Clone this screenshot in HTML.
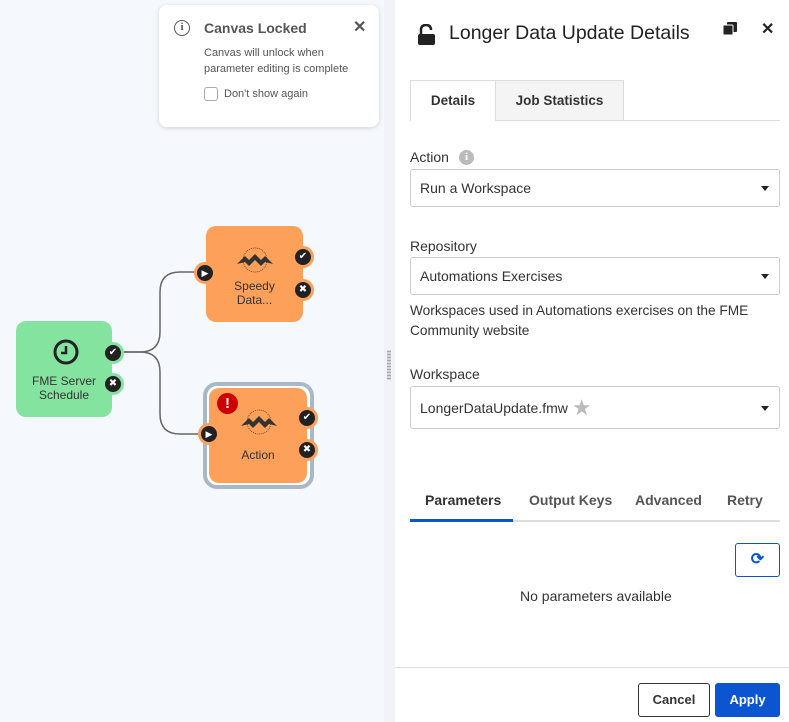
<!DOCTYPE html>
<html><head><style>
*{box-sizing:border-box;margin:0;padding:0}
body{width:789px;height:722px;overflow:hidden;font-family:"Liberation Sans",sans-serif;background:#f5f8fd;position:relative;color:#222}
.abs{position:absolute}
.node{position:absolute;border-radius:10px;text-align:center;font-size:12px;color:#333;line-height:14px}
.port{position:absolute;width:20px;height:20px;border-radius:50%;background:#222;border:3px solid;}
.sel{position:absolute;left:410px;width:370px;border:1px solid #ccc;border-radius:3px;background:#fff;font-size:14px;color:#333;padding-left:9px;display:flex;align-items:center}
.sel:after{content:"";position:absolute;right:10px;top:50%;margin-top:-2px;border:4px solid transparent;border-top:5px solid #222}
.lbl{position:absolute;left:410px;font-size:14px;color:#333}
.tab{position:absolute;top:492px;font-size:14px;font-weight:bold;color:#555}
</style></head><body>
<div class="abs" style="left:384px;top:0;width:11px;height:722px;background:#f1f3f6"></div>
<div class="abs" style="left:387px;top:350px;width:4px;height:30px;background:radial-gradient(circle,#aaa 1px,transparent 1.2px) 0 0/2px 3px"></div>
<div class="abs" style="left:395px;top:0;width:394px;height:722px;background:#fff"></div>

<svg class="abs" style="left:0;top:0" width="384" height="722">
<path d="M120 352 H140 Q160 352 160 332 V292 Q160 272 180 272 H200" fill="none" stroke="#666" stroke-width="1.5"/>
<path d="M120 352 H140 Q160 352 160 372 V414 Q160 434 180 434 H205" fill="none" stroke="#666" stroke-width="1.5"/>
</svg>

<!-- popup -->
<div class="abs" style="left:159px;top:5px;width:220px;height:122px;background:#fff;border-radius:8px;box-shadow:0 1px 5px rgba(0,0,0,.15)"></div>
<div class="abs" style="left:174px;top:20px;width:16px;height:16px;border:1.5px solid #555;border-radius:50%;font-size:11px;font-weight:bold;text-align:center;line-height:13px;color:#555;font-family:'Liberation Serif',serif">i</div>
<div class="abs" style="left:204px;top:20px;font-size:14px;font-weight:bold;color:#555">Canvas Locked</div>
<div class="abs" style="left:353px;top:17px;font-size:16px;font-weight:bold;color:#555">✕</div>
<div class="abs" style="left:204px;top:45px;font-size:11px;color:#555;line-height:16px">Canvas will unlock when<br>parameter editing is complete</div>
<div class="abs" style="left:204px;top:87px;width:14px;height:14px;border:1px solid #aaa;border-radius:3px"></div>
<div class="abs" style="left:224px;top:88px;font-size:11px;color:#555">Don't show again</div>

<!-- green node -->
<div class="node" style="left:16px;top:321px;width:96px;height:96px;background:#85e3a0">
<svg style="position:absolute;left:37px;top:18px" width="26" height="26"><circle cx="13" cy="13" r="11" fill="none" stroke="#222" stroke-width="3"/><path d="M13 7V14H8" fill="none" stroke="#222" stroke-width="2.5"/></svg>
<div style="position:absolute;top:53px;width:100%;font-size:12px">FME Server<br>Schedule</div></div>
<div class="port" style="left:102px;top:342px;border-color:#85e3a0;width:22px;height:22px;color:#fff;font-size:10px;text-align:center;line-height:16px">✔</div>
<div class="port" style="left:102px;top:373px;border-color:#85e3a0;width:22px;height:22px;color:#fff;font-size:10px;text-align:center;line-height:16px">✖</div>

<!-- speedy node -->
<div class="node" style="left:206px;top:226px;width:97px;height:96px;background:#fda05a">
<svg style="position:absolute;left:29px;top:20px" width="40" height="28"><circle cx="20" cy="14" r="12" fill="none" stroke="#333" stroke-width="0.7" stroke-dasharray="1 1"/><path d="M2 18 L10 10 L14 14 L20 8 L26 14 L30 10 L38 18 L30 16 L26 20 L20 14 L14 20 L10 16Z" fill="#333"/></svg>
<div style="position:absolute;top:53px;width:100%">Speedy<br>Data...</div></div>
<div class="port" style="left:194px;top:262px;border-color:#fda05a;width:22px;height:22px;color:#fff;font-size:9px;text-align:center;line-height:16px">▶</div>
<div class="port" style="left:292px;top:246px;border-color:#fda05a;width:22px;height:22px;color:#fff;font-size:10px;text-align:center;line-height:16px">✔</div>
<div class="port" style="left:292px;top:279px;border-color:#fda05a;width:22px;height:22px;color:#fff;font-size:10px;text-align:center;line-height:16px">✖</div>

<!-- action node -->
<div class="abs" style="left:203px;top:382px;width:111px;height:107px;border:4px solid #a9b8c6;border-radius:14px;background:#fff"></div>
<div class="node" style="left:209px;top:388px;width:98px;height:95px;background:#fda05a">
<svg style="position:absolute;left:30px;top:20px" width="40" height="28"><circle cx="20" cy="14" r="12" fill="none" stroke="#333" stroke-width="0.7" stroke-dasharray="1 1"/><path d="M2 18 L10 10 L14 14 L20 8 L26 14 L30 10 L38 18 L30 16 L26 20 L20 14 L14 20 L10 16Z" fill="#333"/></svg>
<div style="position:absolute;top:60px;width:100%">Action</div></div>
<div class="abs" style="left:217px;top:393px;width:21px;height:21px;border-radius:50%;background:#c00;color:#fff;font-weight:bold;font-size:15px;text-align:center;line-height:21px">!</div>
<div class="port" style="left:198px;top:423px;border-color:#fda05a;width:22px;height:22px;color:#fff;font-size:9px;text-align:center;line-height:16px">▶</div>
<div class="port" style="left:296px;top:407px;border-color:#fda05a;width:22px;height:22px;color:#fff;font-size:10px;text-align:center;line-height:16px">✔</div>
<div class="port" style="left:296px;top:439px;border-color:#fda05a;width:22px;height:22px;color:#fff;font-size:10px;text-align:center;line-height:16px">✖</div>

<!-- panel header -->
<svg class="abs" style="left:417px;top:24px" width="20" height="22"><path d="M4 10 V6 Q4 1 9 1 Q14 1 14 6" fill="none" stroke="#222" stroke-width="2.5"/><rect x="1" y="10" width="17" height="11" rx="2" fill="#222"/></svg>
<div class="abs" style="left:449px;top:22px;font-size:19.5px;color:#222">Longer Data Update Details</div>
<svg class="abs" style="left:723px;top:22px" width="14" height="14"><rect x="4" y="0" width="10" height="10" rx="1" fill="#222"/><rect x="0" y="3" width="10" height="10" rx="1" fill="#222" stroke="#fff" stroke-width="1"/></svg>
<div class="abs" style="left:761px;top:19px;font-size:16px;font-weight:bold">✕</div>

<!-- tabs -->
<div class="abs" style="left:410px;top:120px;width:370px;height:1px;background:#ddd"></div>
<div class="abs" style="left:410px;top:80px;width:86px;height:41px;background:#fff;border:1px solid #ddd;border-bottom:none;font-size:13.5px;font-weight:bold;text-align:center;line-height:40px;color:#333">Details</div>
<div class="abs" style="left:496px;top:80px;width:128px;height:41px;background:#f4f4f4;border:1px solid #ddd;border-left:none;font-size:13.5px;font-weight:bold;text-align:center;line-height:40px;color:#333">Job Statistics</div>

<div class="lbl" style="top:149px">Action</div>
<div class="abs" style="left:459px;top:150px;width:15px;height:15px;border-radius:50%;background:#bbb;color:#fff;font-size:11px;font-weight:bold;text-align:center;line-height:15px;font-family:'Liberation Serif',serif">i</div>
<div class="sel" style="top:169px;height:38px">Run a Workspace</div>
<div class="lbl" style="top:238px">Repository</div>
<div class="sel" style="top:257px;height:38px">Automations Exercises</div>
<div class="lbl" style="top:301px;line-height:20px;color:#333;font-size:13.7px">Workspaces used in Automations exercises on the FME<br>Community website</div>
<div class="lbl" style="top:366px">Workspace</div>
<div class="sel" style="top:386px;height:43px">LongerDataUpdate.fmw <span style="color:#bbb;font-size:22px;margin-left:4px">★</span></div>

<div class="tab" style="left:425px;color:#333">Parameters</div>
<div class="tab" style="left:529px">Output Keys</div>
<div class="tab" style="left:635px">Advanced</div>
<div class="tab" style="left:727px">Retry</div>
<div class="abs" style="left:410px;top:520px;width:370px;height:2px;background:#ddd"></div>
<div class="abs" style="left:410px;top:519px;width:103px;height:3px;background:#0b55d0"></div>
<div class="abs" style="left:735px;top:543px;width:45px;height:34px;border:1px solid #0b55d0;border-radius:3px;color:#0b55d0;font-size:16px;font-weight:bold;text-align:center;line-height:31px">⟳</div>
<div class="abs" style="left:520px;top:588px;font-size:14px;color:#333">No parameters available</div>
<div class="abs" style="left:395px;top:667px;width:394px;height:1px;background:#ddd"></div>
<div class="abs" style="left:638px;top:683px;width:72px;height:34px;border:1px solid #333;border-radius:3px;font-size:13px;font-weight:bold;text-align:center;line-height:32px;color:#333">Cancel</div>
<div class="abs" style="left:715px;top:683px;width:65px;height:34px;background:#0b55d0;border-radius:3px;font-size:13px;font-weight:bold;text-align:center;line-height:34px;color:#fff">Apply</div>
</body></html>
